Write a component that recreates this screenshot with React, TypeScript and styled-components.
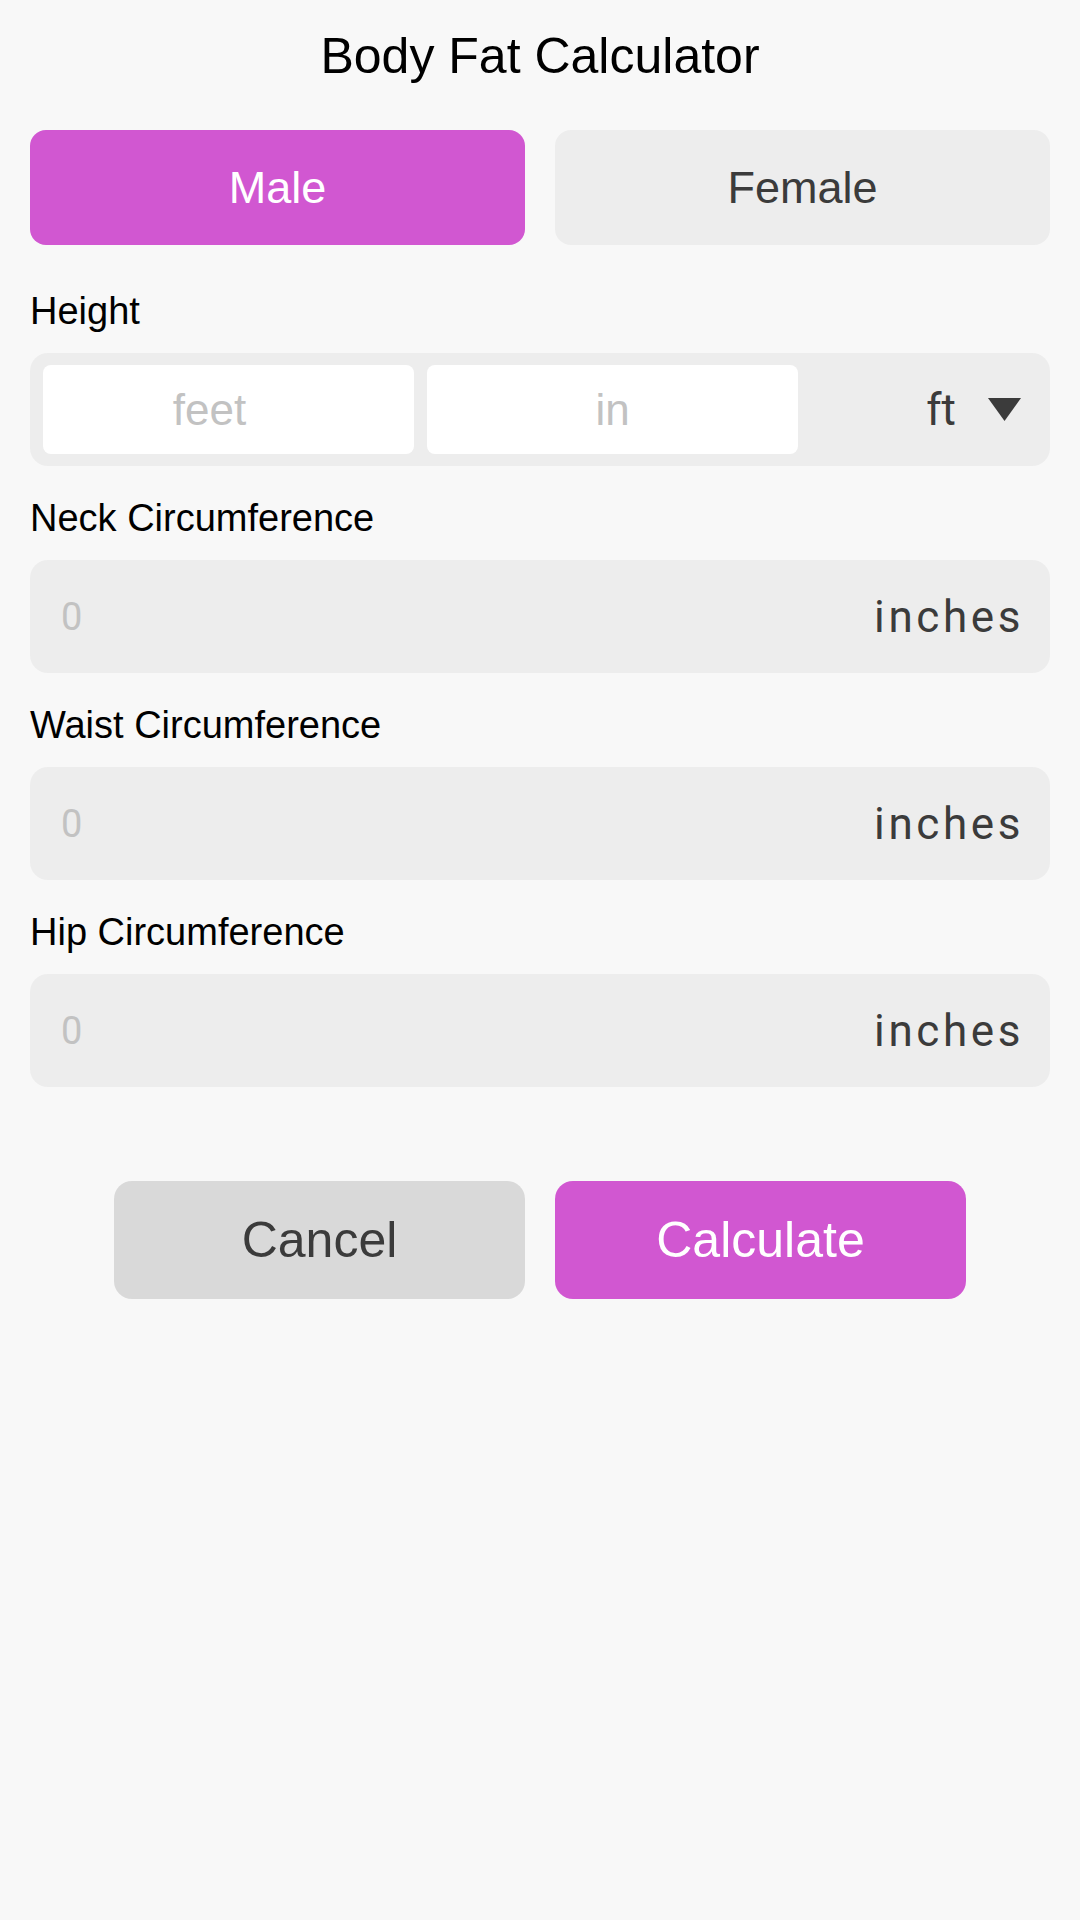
import React from "react";
import styled, { createGlobalStyle } from "styled-components";

const colors = {
  page: "#f8f8f8",
  accent: "#d157d1",
  field: "#ededed",
  cancel: "#d9d9d9",
  ink: "#000000",
  dark: "#3b3b3b",
  hint: "#c2c2c2",
};

const GlobalStyle = createGlobalStyle`
  html, body {
    margin: 0;
    padding: 0;
    background: ${colors.page};
  }
  body {
    font-family: "Liberation Sans", Arial, sans-serif;
  }
  * {
    box-sizing: border-box;
  }
`;

const Page = styled.div`
  min-height: 1920px;
  padding: 28px 30px 0;
  background: ${colors.page};
`;

const Title = styled.h1`
  margin: 0;
  font-size: 50px;
  line-height: 56px;
  font-weight: 400;
  text-align: center;
  color: ${colors.ink};
`;

const GenderRow = styled.div`
  display: flex;
  gap: 30px;
  margin-top: 46px;
`;

const GenderButton = styled.button<{ $active?: boolean }>`
  flex: 1;
  height: 115px;
  border: none;
  border-radius: 16px;
  background: ${(p) => (p.$active ? colors.accent : colors.field)};
  color: ${(p) => (p.$active ? "#ffffff" : colors.dark)};
  font-family: "Liberation Sans", Arial, sans-serif;
  font-size: 45px;
  cursor: pointer;
`;

const Field = styled.div<{ $first?: boolean }>`
  display: flex;
  flex-direction: column;
  gap: 20px;
  margin-top: ${(p) => (p.$first ? "44px" : "30px")};
`;

const Label = styled.label`
  font-size: 38px;
  line-height: 44px;
  color: ${colors.ink};
`;

const HeightBox = styled.div`
  display: flex;
  align-items: stretch;
  gap: 13px;
  height: 113px;
  padding: 12px 13px;
  border-radius: 18px;
  background: ${colors.field};
`;

const SplitInput = styled.input<{ $shift?: number }>`
  width: 371px;
  border: none;
  outline: none;
  border-radius: 8px;
  background: #ffffff;
  text-align: center;
  padding: 0 ${(p) => p.$shift ?? 0}px 0 0;
  font-family: "Liberation Sans", Arial, sans-serif;
  font-size: 44px;
  color: ${colors.dark};

  &::placeholder {
    color: ${colors.hint};
  }
`;

const UnitPicker = styled.div`
  flex: 1;
  display: flex;
  align-items: center;
  justify-content: flex-end;
  gap: 32px;
  padding-right: 16px;
  font-family: Roboto, "Liberation Sans", sans-serif;
  font-size: 44px;
  color: ${colors.dark};
`;

const MeasureBox = styled.div`
  display: flex;
  align-items: center;
  height: 113px;
  padding: 0 26px 0 31px;
  border-radius: 18px;
  background: ${colors.field};
`;

const MeasureInput = styled.input`
  flex: 1;
  min-width: 0;
  border: none;
  outline: none;
  background: transparent;
  font-family: Roboto, "Liberation Sans", sans-serif;
  font-size: 38px;
  color: ${colors.dark};
  padding: 0;

  &::placeholder {
    color: ${colors.hint};
  }
`;

const Unit = styled.span`
  font-family: Roboto, "Liberation Sans", sans-serif;
  font-size: 44px;
  letter-spacing: 3.6px;
  color: ${colors.dark};
`;

const Actions = styled.div`
  display: flex;
  justify-content: center;
  gap: 30px;
  margin-top: 94px;
`;

const ActionButton = styled.button<{ $primary?: boolean }>`
  width: 411px;
  height: 118px;
  border: none;
  border-radius: 18px;
  background: ${(p) => (p.$primary ? colors.accent : colors.cancel)};
  color: ${(p) => (p.$primary ? "#ffffff" : colors.dark)};
  font-family: "Liberation Sans", Arial, sans-serif;
  font-size: 50px;
  cursor: pointer;
`;

function Caret() {
  return (
    <svg width="33" height="23" viewBox="0 0 33 23">
      <path d="M0 0 H33 L16.5 23 Z" fill={colors.dark} />
    </svg>
  );
}

const measures = ["Neck Circumference", "Waist Circumference", "Hip Circumference"];

function App() {
  const [gender, setGender] = React.useState<"male" | "female">("male");

  return (
    <>
      <GlobalStyle />
      <Page>
        <Title>Body Fat Calculator</Title>

        <GenderRow>
          <GenderButton $active={gender === "male"} onClick={() => setGender("male")}>
            Male
          </GenderButton>
          <GenderButton $active={gender === "female"} onClick={() => setGender("female")}>
            Female
          </GenderButton>
        </GenderRow>

        <Field $first>
          <Label>Height</Label>
          <HeightBox>
            <SplitInput placeholder="feet" $shift={38} />
            <SplitInput placeholder="in" />
            <UnitPicker>
              <span>ft</span>
              <Caret />
            </UnitPicker>
          </HeightBox>
        </Field>

        {measures.map((m) => (
          <Field key={m}>
            <Label>{m}</Label>
            <MeasureBox>
              <MeasureInput placeholder="0" />
              <Unit>inches</Unit>
            </MeasureBox>
          </Field>
        ))}

        <Actions>
          <ActionButton>Cancel</ActionButton>
          <ActionButton $primary>Calculate</ActionButton>
        </Actions>
      </Page>
    </>
  );
}

export default App;
